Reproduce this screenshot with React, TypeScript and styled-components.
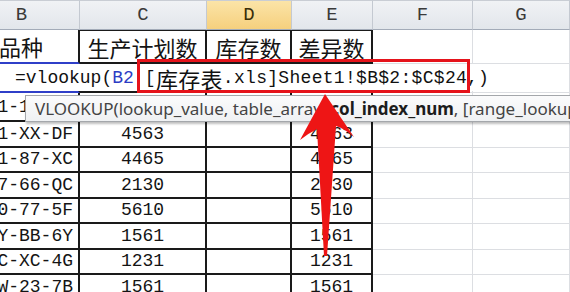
import React from 'react';
import styled, { createGlobalStyle } from 'styled-components';

const GlobalStyle = createGlobalStyle`
  html, body {
    margin: 0;
    padding: 0;
    background: #ffffff;
    overflow: hidden;
  }
`;

const Page = styled.div`
  position: relative;
  width: 570px;
  height: 292px;
  overflow: hidden;
  background: #ffffff;
  font-family: "Liberation Mono", "Noto Sans CJK SC", monospace;
  color: #141414;
`;

// column B starts off-screen, that's why the negative margin
const Sheet = styled.div`
  display: grid;
  grid-template-columns: 116px 127px 85px 81px 100px 97px;
  grid-template-rows: 30px 34px 29px 29px;
  grid-auto-rows: 25.5px;
  margin-left: -36px;
`;

const HeadCell = styled.div<{ $active?: boolean }>`
  box-sizing: border-box;
  display: flex;
  align-items: center;
  justify-content: center;
  border-top: 1px solid #c9cdd4;
  border-right: 1px solid #c4c9d1;
  border-bottom: 1px solid #a3abb8;
  background: ${p => p.$active
    ? 'linear-gradient(#fbe4a8, #f6d07e)'
    : 'linear-gradient(#f0f2f5, #e2e6eb)'};
  color: ${p => p.$active ? '#3a2e08' : '#3a3a3a'};
  font-family: "Liberation Mono", monospace;
  font-size: 19px;
`;

type Edge = 'table' | 'grid';

const Cell = styled.div<{ $edge?: Edge; $align?: 'left' | 'center' | 'right'; $ref?: boolean; $top?: boolean }>`
  box-sizing: border-box;
  display: flex;
  align-items: center;
  justify-content: ${p => p.$align === 'right' ? 'flex-end' : p.$align === 'left' ? 'flex-start' : 'center'};
  padding-right: ${p => p.$align === 'right' ? '5px' : '0'};
  overflow: hidden;
  white-space: nowrap;
  font-size: 18px;
  border-top: ${p => p.$top ? '1px solid #1a1a1a' : 'none'};
  border-right: ${p => p.$edge === 'table' ? '2px solid #1a1a1a' : '1px solid #dcdee2'};
  border-bottom: ${p => p.$ref
    ? '2px solid #2f3fc8'
    : p.$edge === 'table' ? '2px solid #1a1a1a' : '1px solid #dcdee2'};
`;

const Cjk = styled.span`
  font-family: "Noto Sans CJK SC", sans-serif;
  font-size: 22px;
  line-height: 1;
`;

const EditCell = styled.div`
  box-sizing: border-box;
  display: flex;
  align-items: flex-start;
  padding-left: 51px;
  border-right: 2px solid #1a1a1a;
  border-bottom: 2px solid #2f3fc8;
  position: relative;
  z-index: 2;
  white-space: nowrap;
`;

const Editor = styled.div`
  display: flex;
  align-items: center;
  height: 27px;
  padding-right: 6px;
  background: #ffffff;
  font-size: 18px;
  color: #111;
`;

const RefText = styled.span`
  color: #2c3cc4;
`;

const RangeMark = styled.span`
  position: relative;
  display: inline-flex;
  align-items: center;
  height: 27px;
  margin-left: 11px;
  letter-spacing: 0.3px;

  &::after {
    content: '';
    position: absolute;
    left: -8px;
    right: -3px;
    top: -5px;
    bottom: -2px;
    border: 3px solid #e5131b;
  }
`;

const Tooltip = styled.div`
  position: absolute;
  left: 25px;
  top: 95px;
  width: 570px;
  height: 27px;
  box-sizing: border-box;
  padding-left: 9px;
  display: flex;
  align-items: center;
  border: 1px solid #a4a7ab;
  background: linear-gradient(#fbfbfc, #eff1f3);
  box-shadow: 1px 2px 2px rgba(0, 0, 0, 0.25);
  font-family: "Noto Sans", "Open Sans", sans-serif;
  font-size: 17px;
  color: #444;
  white-space: nowrap;

  b {
    color: #1c1c1c;
    font-weight: 700;
  }
`;

const Arrow = styled.svg`
  position: absolute;
  left: 0;
  top: 0;
  pointer-events: none;
`;

const columns = ['B', 'C', 'D', 'E', 'F', 'G'];

const rows = [
  { code: '1-1A-CF', plan: '3520', diff: '3520' },
  { code: '1-XX-DF', plan: '4563', diff: '4563' },
  { code: '1-87-XC', plan: '4465', diff: '4465' },
  { code: '7-66-QC', plan: '2130', diff: '2130' },
  { code: '0-77-5F', plan: '5610', diff: '5610' },
  { code: 'Y-BB-6Y', plan: '1561', diff: '1561' },
  { code: 'C-XC-4G', plan: '1231', diff: '1231' },
  { code: 'W-23-7B', plan: '1561', diff: '1561' },
];

export default function App() {
  return (
    <Page>
      <GlobalStyle />
      <Sheet>
        {columns.map(c => <HeadCell key={c} $active={c === 'D'}>{c}</HeadCell>)}

        <Cell $edge="table" $ref><Cjk>品种</Cjk></Cell>
        <Cell $edge="table" $top><Cjk>生产计划数</Cjk></Cell>
        <Cell $edge="table" $top><Cjk>库存数</Cjk></Cell>
        <Cell $edge="table" $top><Cjk>差异数</Cjk></Cell>
        <Cell />
        <Cell />

        <EditCell>
          <Editor>
            =vlookup(<RefText>B2</RefText>
            <RangeMark>[<Cjk>库存表</Cjk>.xls]Sheet1!$B$2:$C$24</RangeMark>,)
          </Editor>
        </EditCell>
        <Cell $edge="table" />
        <Cell $edge="table" />
        <Cell $edge="table" />
        <Cell />
        <Cell />

        {rows.map(r => (
          <React.Fragment key={r.code}>
            <Cell $edge="table" $align="right">{r.code}</Cell>
            <Cell $edge="table">{r.plan}</Cell>
            <Cell $edge="table" />
            <Cell $edge="table">{r.diff}</Cell>
            <Cell />
            <Cell />
          </React.Fragment>
        ))}
      </Sheet>

      <Tooltip>
        VLOOKUP(lookup_value, table_array,&nbsp;<b>col_index_num</b>, [range_lookup])
      </Tooltip>

      <Arrow width="570" height="292" viewBox="0 0 570 292">
        <path
          d="M325 94 Q313 116 300 140 Q309 133 317 129 L324 256 L327 256 L336 126 Q345 129 354 137 Q339 115 325 94 Z"
          fill="#ee1515"
        />
      </Arrow>
    </Page>
  );
}
